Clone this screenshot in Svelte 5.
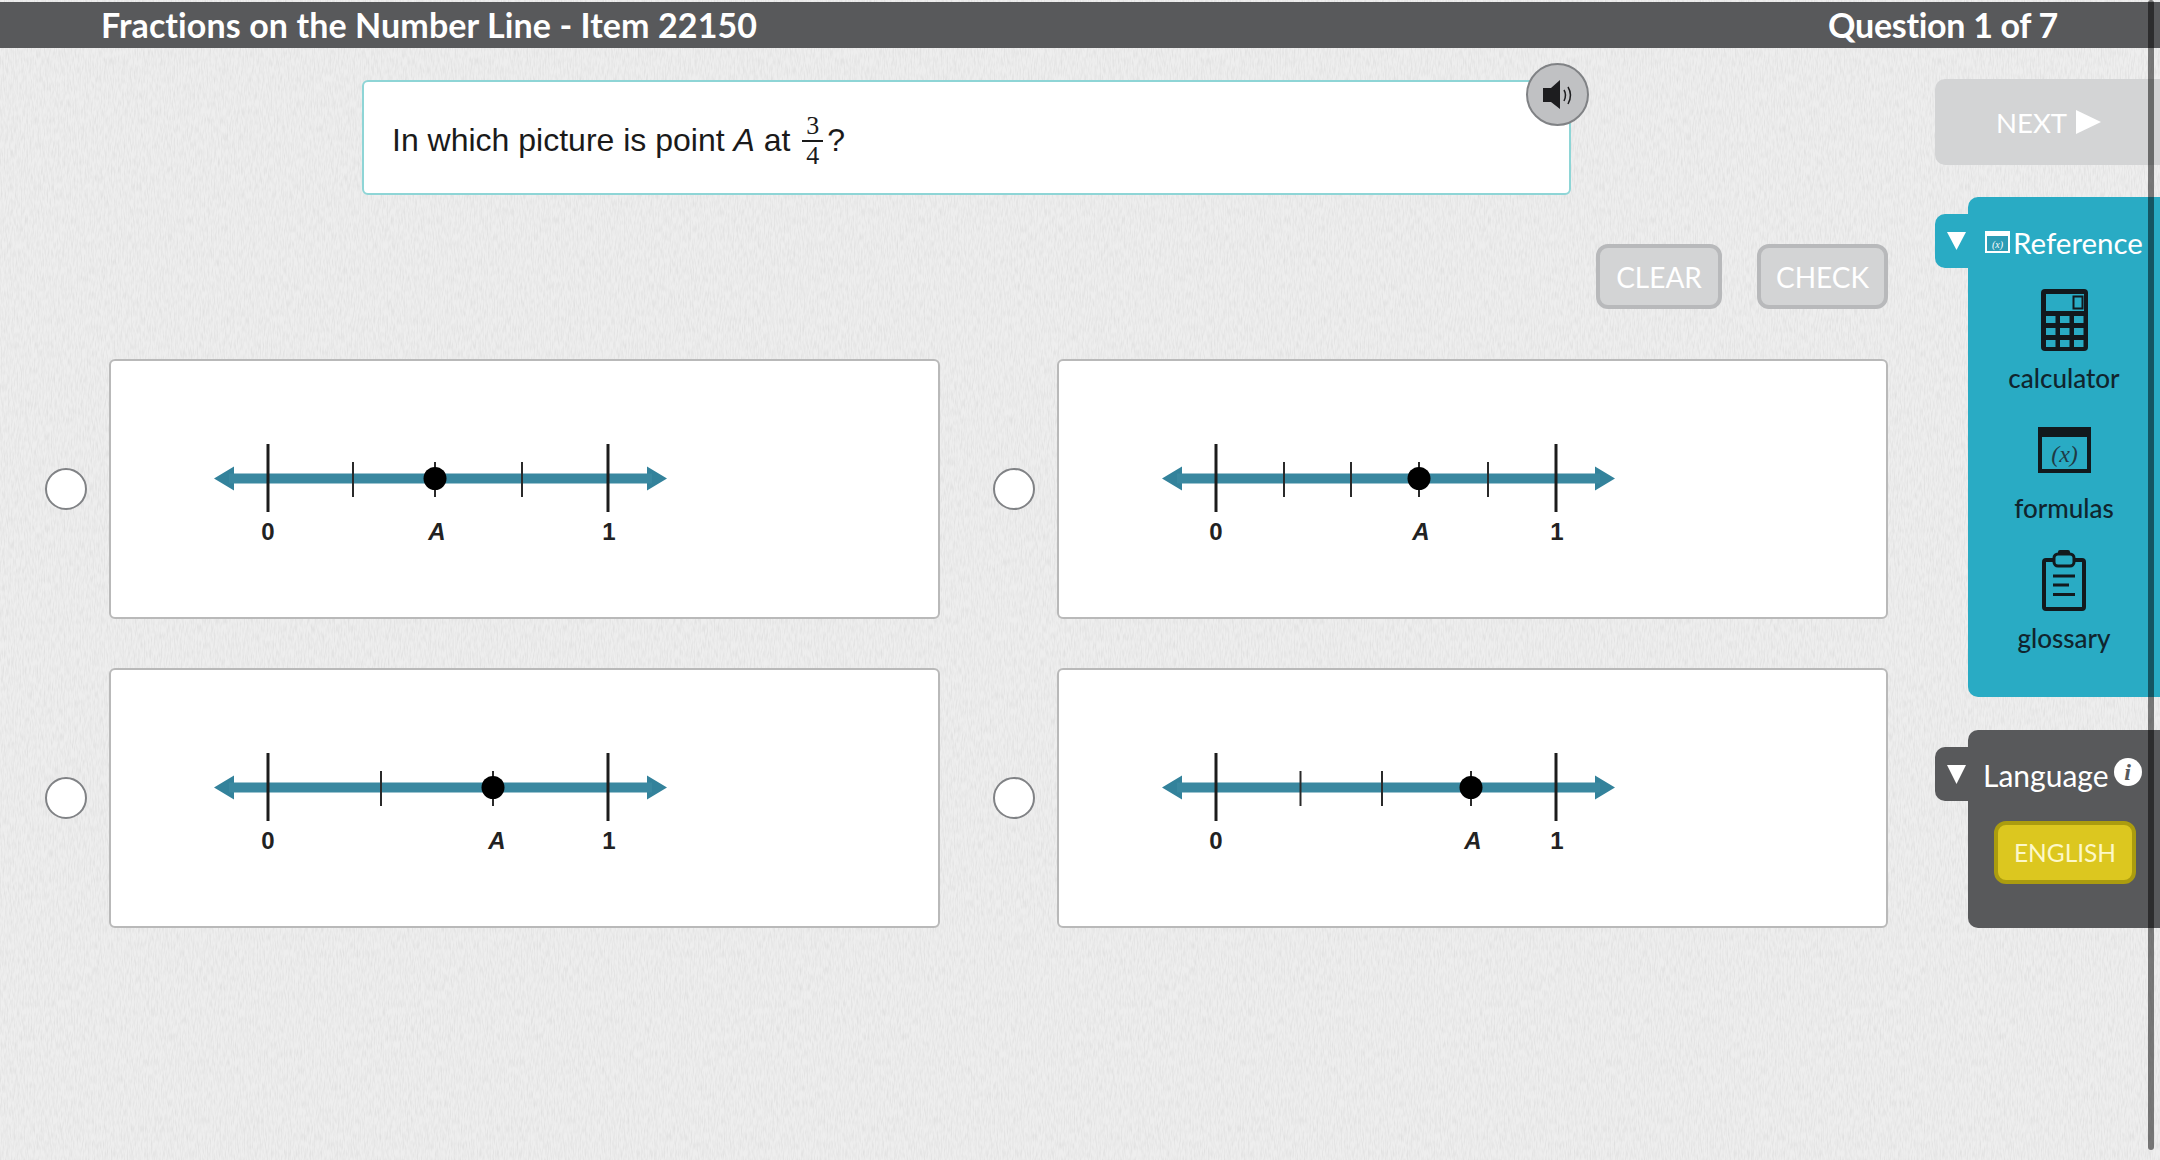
<script>
  const W = 831, H = 260;
  const options = [
    { minor: [244, 413], dot: 326, labelA: 328, one: 500 },
    { minor: [227, 294, 431], dot: 362, labelA: 364, one: 500 },
    { minor: [272], dot: 384, labelA: 388, one: 500 },
    { minor: [243.5, 325], dot: 414, labelA: 416, one: 500 }
  ];
</script>

<div class="page">
  <svg class="texture" width="2160" height="1160" aria-hidden="true">
    <filter id="weave" x="0" y="0" width="100%" height="100%">
      <feTurbulence type="fractalNoise" baseFrequency="0.7 0.12" numOctaves="2" seed="4" />
      <feColorMatrix type="matrix" values="0 0 0 0 0.6  0 0 0 0 0.6  0 0 0 0 0.6  0.8 0 0 0 -0.3" />
    </filter>
    <rect width="2160" height="1160" filter="url(#weave)" />
  </svg>

  <header class="topbar">
    <h1>Fractions on the Number Line - Item 22150</h1>
    <div class="progress">Question 1 of 7</div>
  </header>

  <div class="layout">
    <main class="main">
      <section class="question">
        <p>In which picture is point <i>A</i> at <span class="fraction"><span>3</span><span class="denominator">4</span></span><span class="qmark">?</span></p>
        <button class="speaker" aria-label="Read aloud">
          <svg width="59" height="59" viewBox="2 2 59 59">
            <path d="M17 25h8l9-8v29l-9-7h-8z" fill="#1d1d1f" />
            <path d="M38 27q3 5 0 11M42 24q5 8 0 17" fill="none" stroke="#1d1d1f" stroke-width="1.5" />
          </svg>
        </button>
      </section>

      <div class="actions">
        <button class="ghost clear">CLEAR</button>
        <button class="ghost check">CHECK</button>
      </div>

      <div class="options">
        {#each options as o}
          <div class="option">
            <span class="radio"></span>
            <div class="card">
              <svg width={W - 4} height={H - 4} viewBox="2 2 {W - 4} {H - 4}">
                <path d="M105 119.500l20-12v24zM558 119.500l-20-12v24z" fill="#33829b" />
                <line x1="120" y1="119.500" x2="543" y2="119.500" stroke="#3a88a0" stroke-width="10" />
                <line x1="159" y1="85" x2="159" y2="153" class="major" />
                <line x1="499" y1="85" x2="499" y2="153" class="major" />
                {#each o.minor as x}
                  <line x1={x} y1="103" x2={x} y2="138" class="minor" />
                {/each}
                <line x1={o.dot} y1="103" x2={o.dot} y2="138" class="minor" />
                <circle cx={o.dot} cy="119.500" r="11.500" fill="#000" />
                <text x="159" y="181" class="num">0</text>
                <text x={o.labelA} y="181" class="num ital">A</text>
                <text x={o.one} y="181" class="num">1</text>
              </svg>
            </div>
          </div>
        {/each}
      </div>
    </main>

    <aside class="side">
      <button class="next">
        NEXT
        <svg width="25" height="24" viewBox="0 0 25 24"><path d="M0 0l25 12L0 24z" fill="#fff" /></svg>
      </button>

      <section class="drawer reference">
        <div class="tab">
          <svg width="19" height="18" viewBox="0 0 19 18"><path d="M0 0h19l-9.500 18z" fill="#fff" /></svg>
        </div>
        <div class="panel">
          <div class="panel-title">
            <svg width="25" height="22" viewBox="0 0 25 22">
              <rect x="1" y="1" width="23" height="20" fill="#2d9cb5" stroke="#fff" stroke-width="2" />
              <rect x="1" y="1" width="23" height="4" fill="#fff" />
              <text x="12.500" y="17" class="mini">(x)</text>
            </svg>
            <span>Reference</span>
          </div>

          <div class="tool">
            <div class="tool-icon">
              <svg width="47" height="62" viewBox="0 0 47 62">
                <rect width="47" height="62" rx="4" fill="#12191d" />
                <rect x="5" y="5" width="38" height="17" fill="#29abc4" />
                <rect x="32.500" y="7.500" width="9" height="12" fill="none" stroke="#12191d" stroke-width="2" />
                {#each [27, 39, 51] as y}
                  {#each [5, 19, 33] as x}
                    <rect {x} {y} width="9.500" height="7" fill="#29abc4" />
                  {/each}
                {/each}
              </svg>
            </div>
            <span>calculator</span>
          </div>

          <div class="tool">
            <div class="tool-icon">
              <svg width="53" height="46" viewBox="0 0 53 46">
                <rect x="2" y="2" width="49" height="42" fill="none" stroke="#12191d" stroke-width="4" />
                <rect width="53" height="10" fill="#12191d" />
                <text x="26.500" y="35" class="fx">(x)</text>
              </svg>
            </div>
            <span>formulas</span>
          </div>

          <div class="tool">
            <div class="tool-icon">
              <svg width="44" height="61" viewBox="0 0 44 61">
                <rect x="2" y="10" width="40" height="49" rx="2" fill="none" stroke="#12191d" stroke-width="4" />
                <rect x="16" y="0" width="12" height="6" rx="2" fill="#12191d" />
                <rect x="12" y="4" width="20" height="12" rx="4" fill="#29abc4" stroke="#12191d" stroke-width="3" />
                <path d="M11 26h22M11 35h16M11 44.500h22" stroke="#12191d" stroke-width="3" />
              </svg>
            </div>
            <span>glossary</span>
          </div>
        </div>
      </section>

      <section class="drawer language">
        <div class="tab">
          <svg width="19" height="19" viewBox="0 0 19 19"><path d="M0 0h19l-9.500 19z" fill="#fff" /></svg>
        </div>
        <div class="panel">
          <div class="panel-title">
            <span>Language</span>
            <span class="info">i</span>
          </div>
          <button class="english">ENGLISH</button>
        </div>
      </section>
    </aside>
  </div>

  <div class="scrollthumb"></div>
</div>

<style>
  :global(body) {
    margin: 0;
    background: #eeeeee;
  }
  .page {
    position: relative;
    width: 2160px;
    height: 1160px;
    overflow: hidden;
    font-family: "Lato", "Noto Sans", sans-serif;
  }
  .texture {
    position: absolute;
    inset: 0;
  }
  button {
    font-family: inherit;
    cursor: pointer;
  }
  .topbar {
    position: relative;
    margin-top: 2px;
    height: 46px;
    box-sizing: border-box;
    padding: 0 102px 2px 101px;
    display: flex;
    align-items: center;
    justify-content: space-between;
    background: #58595b;
    color: #fff;
    font-size: 34px;
    font-weight: 700;
    letter-spacing: 0.1px;
  }
  .topbar h1 {
    margin: 0;
    font: inherit;
  }
  .progress {
    letter-spacing: -0.3px;
  }
  .layout {
    position: relative;
    display: flex;
    height: 1112px;
  }
  .main {
    width: 1935px;
    box-sizing: border-box;
    padding-top: 32px;
  }
  .question {
    position: relative;
    box-sizing: border-box;
    margin-left: 362px;
    width: 1209px;
    height: 115px;
    padding: 6px 0 0 28px;
    display: flex;
    align-items: center;
    background: #fff;
    border: 2px solid #8ed5d6;
    border-radius: 6px;
  }
  .question p {
    margin: 0;
    white-space: pre;
    font-family: "Liberation Sans", Arial, sans-serif;
    font-size: 32px;
    color: #1a1a1a;
  }
  .fraction {
    display: inline-flex;
    flex-direction: column;
    align-items: center;
    vertical-align: middle;
    margin: -15px 0 -12px 3px;
    font-family: "Liberation Serif", serif;
    font-size: 26px;
    line-height: 28px;
    width: 21px;
  }
  .denominator {
    border-top: 2px solid #1a1a1a;
    width: 100%;
    text-align: center;
  }
  .qmark {
    margin-left: 4px;
  }
  .speaker {
    position: absolute;
    right: -20px;
    top: -19px;
    width: 63px;
    height: 63px;
    padding: 0;
    box-sizing: border-box;
    border-radius: 50%;
    background: #c0c1c3;
    border: 2px solid #808285;
  }
  .speaker svg {
    display: block;
  }
  .actions {
    display: flex;
    justify-content: flex-end;
    gap: 35px;
    margin-top: 49px;
    padding-right: 47px;
  }
  .ghost {
    box-sizing: border-box;
    height: 65px;
    padding: 0;
    background: #d3d4d5;
    border: 4px solid #b8b9bb;
    border-radius: 12px;
    color: #fff;
    font-size: 28px;
  }
  .clear {
    width: 126px;
  }
  .check {
    width: 131px;
  }
  .options {
    display: grid;
    grid-template-columns: 895px 895px;
    column-gap: 53px;
    row-gap: 49px;
    margin-top: 50px;
    padding-left: 45px;
  }
  .option {
    display: flex;
    align-items: center;
    gap: 22px;
  }
  .radio {
    box-sizing: border-box;
    width: 42px;
    height: 42px;
    flex: none;
    background: #fff;
    border: 2px solid #808285;
    border-radius: 50%;
  }
  .card {
    box-sizing: border-box;
    width: 831px;
    height: 260px;
    background: #fff;
    border: 2px solid #b9b9b9;
    border-radius: 6px;
  }
  .card svg {
    display: block;
  }
  .major {
    stroke: #1c1c1c;
    stroke-width: 3;
  }
  .minor {
    stroke: #2a2a2a;
    stroke-width: 2;
  }
  .num {
    font-family: "Liberation Sans", Arial, sans-serif;
    font-weight: 700;
    font-size: 24px;
    fill: #222;
    text-anchor: middle;
  }
  .ital {
    font-style: italic;
  }
  .side {
    width: 225px;
    padding-top: 31px;
    display: flex;
    flex-direction: column;
  }
  .next {
    display: flex;
    align-items: center;
    gap: 9px;
    box-sizing: border-box;
    width: 100%;
    height: 86px;
    padding: 0 0 0 61px;
    border: 0;
    border-radius: 10px 0 0 10px;
    background: #d3d4d5;
    color: #fff;
    font-size: 27.5px;
  }
  .drawer {
    display: flex;
    align-items: flex-start;
  }
  .tab {
    flex: none;
    box-sizing: border-box;
    width: 33px;
    height: 54px;
    margin-top: 17px;
    padding: 18px 0 0 12px;
    border-radius: 10px 0 0 10px;
  }
  .tab svg {
    display: block;
  }
  .panel {
    flex: 1;
    border-radius: 10px 0 0 10px;
    box-sizing: border-box;
  }
  .panel-title {
    display: flex;
    align-items: center;
    color: #fff;
    font-size: 29.5px;
  }
  .reference {
    margin-top: 32px;
  }
  .reference .tab,
  .reference .panel {
    background: #29abc4;
  }
  .reference .panel {
    height: 500px;
  }
  .reference .panel-title {
    height: 92px;
    box-sizing: border-box;
    padding: 0 0 2px 17px;
    gap: 3px;
  }
  .tool {
    height: 130px;
    display: flex;
    flex-direction: column;
    align-items: center;
    color: #10252e;
    font-size: 26px;
    font-weight: 500;
  }
  .tool-icon {
    height: 62px;
    display: flex;
    align-items: center;
    margin-bottom: 11px;
  }
  .tool-icon svg {
    display: block;
  }
  .mini {
    font-family: "Liberation Serif", serif;
    font-style: italic;
    font-size: 10px;
    fill: #fff;
    text-anchor: middle;
  }
  .fx {
    font-family: "Liberation Serif", serif;
    font-style: italic;
    font-size: 24px;
    fill: #1f3a45;
    text-anchor: middle;
  }
  .language {
    margin-top: 33px;
  }
  .language .tab,
  .language .panel {
    background: #58595b;
  }
  .language .panel {
    height: 198px;
    padding-top: 23px;
  }
  .language .panel-title {
    height: 44px;
    padding-left: 15px;
    font-size: 30px;
    gap: 5px;
  }
  .info {
    display: flex;
    align-items: center;
    justify-content: center;
    width: 28px;
    height: 28px;
    margin-top: -6px;
    border-radius: 50%;
    background: #fff;
    color: #58595b;
    font-family: "Liberation Serif", serif;
    font-style: italic;
    font-weight: 700;
    font-size: 24px;
  }
  .english {
    display: block;
    box-sizing: border-box;
    width: 142px;
    height: 63px;
    margin: 24px 0 0 26px;
    padding: 0;
    background: #dcc71f;
    border: 4px solid #ab9c0f;
    border-radius: 12px;
    color: #fdf8c8;
    font-size: 24.5px;
  }
  .scrollthumb {
    position: absolute;
    left: 2148px;
    top: 0;
    width: 6px;
    height: 1150px;
    border-radius: 3px;
    background: rgba(0, 0, 0, 0.5);
  }
</style>
